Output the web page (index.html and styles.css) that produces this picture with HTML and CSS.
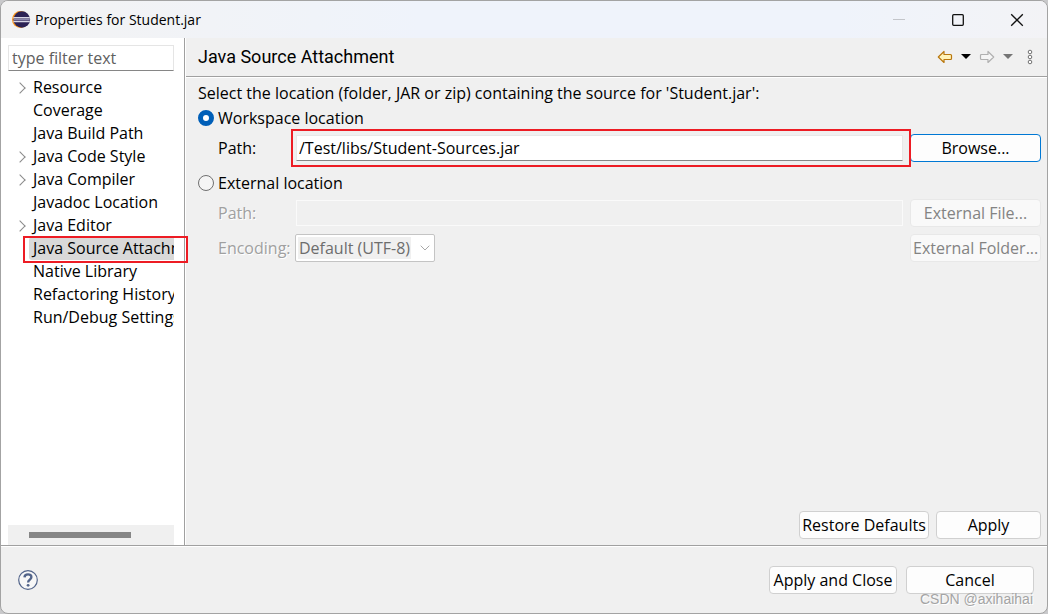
FILE: index.html
```html
<!DOCTYPE html>
<html lang="en">
<head>
<meta charset="utf-8">
<title>Properties for Student.jar</title>
<link rel="stylesheet" href="styles.css">
</head>
<body>
<div class="window">
  <header class="titlebar">
    <svg class="logo" width="20" height="20" viewBox="0 0 20 20" aria-hidden="true">
      <circle cx="9.5" cy="9.5" r="8.5" fill="#f7941e"/>
      <circle cx="10.8" cy="9.5" r="8.3" fill="#2c2255"/>
      <path d="M2.4 7.8h16.4M2.4 11.4h16.4" stroke="#d9d7e6" stroke-width="1.5"/>
      <path d="M2.6 9.6h16.2" stroke="#8d87ad" stroke-width="1.4"/>
    </svg>
    <h1 class="title">Properties for Student.jar</h1>
    <div class="window-controls">
      <button class="control" aria-label="Minimize" disabled><svg width="14" height="14"><path d="M1 6.5h12" stroke="#c3c5ca"/></svg></button>
      <button class="control" aria-label="Maximize"><svg width="14" height="14"><rect x="1.7" y="1.7" width="10.6" height="10.6" rx="1" fill="none" stroke="#111" stroke-width="1.3"/></svg></button>
      <button class="control" aria-label="Close"><svg width="14" height="14"><path d="M1.2 1.2l11.6 11.6M12.8 1.2L1.2 12.8" stroke="#111" stroke-width="1.3"/></svg></button>
    </div>
  </header>

  <div class="main">
    <nav class="sidebar" aria-label="Property pages">
      <input class="filter" type="text" placeholder="type filter text" aria-label="Filter">
      <ul class="tree">
        <li class="node parent"><span class="label">Resource</span></li>
        <li class="node"><span class="label">Coverage</span></li>
        <li class="node"><span class="label">Java Build Path</span></li>
        <li class="node parent"><span class="label">Java Code Style</span></li>
        <li class="node parent"><span class="label">Java Compiler</span></li>
        <li class="node"><span class="label">Javadoc Location</span></li>
        <li class="node parent"><span class="label">Java Editor</span></li>
        <li class="node marked"><span class="label selected">Java Source Attachment</span></li>
        <li class="node"><span class="label">Native Library</span></li>
        <li class="node"><span class="label">Refactoring History</span></li>
        <li class="node"><span class="label">Run/Debug Settings</span></li>
      </ul>
      <div class="scrollbar"><div class="thumb"></div></div>
    </nav>

    <main class="page">
      <div class="page-header">
        <h2 class="heading">Java Source Attachment</h2>
        <div class="toolbar">
          <button class="tool" aria-label="Back"><svg width="16" height="14"><path d="M1.3 7L7 1.5v3h6.5q1 0 1 1v3q0 1-1 1H7v3z" fill="#fff3b8" stroke="#b9770e" stroke-width="1.2" stroke-linejoin="round"/></svg></button>
          <button class="tool" aria-label="Back history"><svg width="10" height="6"><path d="M0 0h10L5 5z" fill="#000"/></svg></button>
          <button class="tool" aria-label="Forward" disabled><svg width="16" height="14"><path d="M14.7 7L9 1.5v3H2.5q-1 0-1 1v3q0 1 1 1H9v3z" fill="#f5f5f5" stroke="#b0b0b0" stroke-width="1.2" stroke-linejoin="round"/></svg></button>
          <button class="tool" aria-label="Forward history" disabled><svg width="10" height="6"><path d="M0 0h10L5 5z" fill="#757575"/></svg></button>
          <button class="tool menu" aria-label="View menu"><svg width="6" height="16" fill="#fff" stroke="#707070"><circle cx="3" cy="3" r="1.8"/><circle cx="3" cy="8" r="1.8"/><circle cx="3" cy="13" r="1.8"/></svg></button>
        </div>
      </div>

      <form class="form">
        <p class="intro">Select the location (folder, JAR or zip) containing the source for 'Student.jar':</p>
        <label class="choice"><input class="radio" type="radio" name="location" checked>Workspace location</label>
        <div class="row">
          <label for="workspace-path">Path:</label>
          <div class="field marked"><input class="text" id="workspace-path" type="text" value="/Test/libs/Student-Sources.jar"></div>
          <button class="button focused" type="button">Browse...</button>
        </div>
        <label class="choice second"><input class="radio" type="radio" name="location">External location</label>
        <div class="row disabled">
          <label for="external-path">Path:</label>
          <div class="field"><input class="text" id="external-path" type="text" disabled></div>
          <button class="button" type="button" disabled>External File...</button>
        </div>
        <div class="row disabled">
          <label for="encoding">Encoding:</label>
          <div class="field">
            <div class="combo">
              <select class="select" id="encoding" disabled><option>Default (UTF-8)</option></select>
              <svg class="chevron" width="10" height="6" aria-hidden="true"><path d="M.7.7L5 5 9.3.7" fill="none" stroke="#a8a8a8"/></svg>
            </div>
          </div>
          <button class="button" type="button" disabled>External Folder...</button>
        </div>
      </form>

      <div class="page-actions">
        <button class="button restore" type="button">Restore Defaults</button>
        <button class="button apply" type="button">Apply</button>
      </div>
    </main>
  </div>

  <footer class="footer">
    <button class="help" aria-label="Help"><svg width="20" height="20" viewBox="0 0 20 20"><circle cx="10" cy="10" r="9.3" fill="#f7f7f7" stroke="#52648a" stroke-width="1.2"/><path d="M6.5 7.4C6.7 3.4 13.5 3.5 13.4 7.1c0 2.5-3.3 2.5-3.3 5.4" fill="none" stroke="#52648a" stroke-width="2.4"/><circle cx="10.1" cy="15.3" r="1.4" fill="#52648a"/></svg></button>
    <div class="dialog-actions">
      <button class="button dialog-button" type="button">Apply and Close</button>
      <button class="button dialog-button" type="button">Cancel</button>
    </div>
    <span class="watermark">CSDN @axihaihai</span>
  </footer>
</div>
</body>
</html>
```
FILE: styles.css
```css
* { box-sizing: border-box; }
body {
  margin: 0;
  background: #c9c9cb;
  color: #000;
  font: 16px/20px "Open Sans", "Noto Sans", sans-serif;
}
button, input, select { font: inherit; color: inherit; }
h1, h2, p, ul { margin: 0; padding: 0; font-weight: 400; }
button { padding: 0; border: 0; background: none; }
svg { display: block; }

.window {
  display: flex;
  flex-direction: column;
  min-height: 100vh;
  border: 1px solid #a3a3a3;
  border-radius: 8px;
  background: #f0f0f0;
  overflow: hidden;
}
.titlebar {
  display: flex;
  align-items: center;
  height: 37px;
  padding-left: 10px;
  background: linear-gradient(90deg, #f3f3f3, #eff3fb 40%, #eff3fb 80%, #f3f3f6);
}
.title { margin-left: 4px; font-size: 14px; }
.window-controls { display: flex; margin: 0 1px 0 auto; }
.control { display: grid; place-items: center; width: 59px; height: 36px; }

.main { display: flex; flex: 1; border-bottom: 1px solid #a0a0a0; }
.sidebar {
  display: flex;
  flex-direction: column;
  flex: none;
  width: 184px;
  padding: 7px 10px 0 7px;
  border-right: 1px solid #a0a0a0;
  background: #fff;
}
.filter {
  width: 100%;
  height: 26px;
  padding: 0 3px;
  border: 1px solid #e5e5e5;
  border-bottom-color: #868686;
  background: #fff;
}
.filter::placeholder { color: #606060; opacity: 1; }
.tree { margin-top: 5px; list-style: none; }
.node {
  position: relative;
  display: flex;
  height: 23px;
  padding-left: 21px;
  line-height: 23px;
}
.label {
  flex: 1;
  min-width: 0;
  padding-left: 4px;
  overflow: hidden;
  white-space: nowrap;
}
.selected { border-radius: 3px 0 0 3px; background: #d9d9d9; }
.parent::before {
  content: "";
  position: absolute;
  left: 8px;
  top: 8px;
  width: 7px;
  height: 7px;
  border: solid #8a8a8a;
  border-width: 1px 1px 0 0;
  transform: rotate(45deg);
}
.marked { position: relative; }
.marked::after {
  content: "";
  position: absolute;
  inset: -6px -8px -6px -5px;
  border: 2px solid #ed1c24;
  pointer-events: none;
}
.node.marked::after { inset: -1px -14px -3px 15px; z-index: 1; }
.scrollbar { height: 20px; margin-top: auto; padding: 7px 21px; background: #f0f0f0; }
.thumb { width: 82%; height: 6px; background: #868686; }

.page {
  display: flex;
  flex: 1;
  flex-direction: column;
  min-width: 0;
  border-left: 1px solid #fff;
}
.page-header {
  display: flex;
  align-items: center;
  height: 39px;
  padding: 0 14px 0 12px;
  border-bottom: 1px solid #a0a0a0;
  box-shadow: 0 1px #fff;
}
.heading { font: 18px/20px Roboto, sans-serif; }
.toolbar { display: flex; align-items: center; gap: 8px; margin-left: auto; }
.menu { margin-left: 6px; }

.form { padding: 6px 6px 0 12px; }
.choice { display: flex; align-items: center; gap: 4px; margin-top: 5px; }
.radio {
  appearance: none;
  width: 16px;
  height: 16px;
  margin: 0;
  border: 1px solid #707070;
  border-radius: 50%;
  background: #f5f5f5;
}
.radio:checked { border: 5px solid #005fb8; background: #fff; }
.row {
  display: grid;
  grid-template-columns: 78px 1fr 131px;
  align-items: center;
  margin: 6px 0 7px 20px;
}
.second { margin-top: 11px; }
.field { margin-right: 7px; }
.text {
  display: block;
  width: 100%;
  height: 26px;
  padding: 0 2px;
  border: 1px solid #e8e8e8;
  border-bottom-color: #868686;
  background: #fff;
}
.text:disabled { border-color: #fafafa; background: #f0f0f0; }
.disabled { color: #a0a0a0; text-shadow: 1px 1px #fff; }
.button {
  height: 28px;
  padding: 0 2px;
  border: 1px solid #d0d0d0;
  border-radius: 4px;
  background: #fdfdfd;
  white-space: nowrap;
}
.button:disabled { border-color: #e8e8e8; background: #f9f9f9; color: #838383; text-shadow: none; }
.focused { border-color: #0078d4; }
.combo { position: relative; width: 140px; margin-left: -1px; }
.select {
  appearance: none;
  display: block;
  width: 100%;
  height: 28px;
  padding: 0 3px;
  border: 1px solid #c4c4c4;
  border-radius: 2px;
  background: linear-gradient(#f0f0f0, #f0f0f0) 2px 2px / 113px 22px no-repeat #fff;
  color: #6d6d6d;
  opacity: 1;
  text-shadow: none;
}
.chevron { position: absolute; right: 5px; top: 11px; pointer-events: none; }
.page-actions {
  display: flex;
  justify-content: flex-end;
  gap: 7px;
  margin-top: auto;
  padding: 12px 6px 6px;
}
.restore { min-width: 130px; }
.apply { min-width: 105px; }

.footer {
  position: relative;
  display: flex;
  align-items: center;
  justify-content: space-between;
  height: 67px;
  padding: 0 13px 0 17px;
  border-top: 1px solid #fff;
}
.dialog-actions { display: flex; gap: 9px; }
.dialog-button { min-width: 128px; }
.watermark {
  position: absolute;
  right: 14px;
  bottom: 5px;
  color: #a4a4a4;
  font: 14px/18px "Liberation Sans", sans-serif;
  text-shadow: 1px 1px #fff;
}
```
